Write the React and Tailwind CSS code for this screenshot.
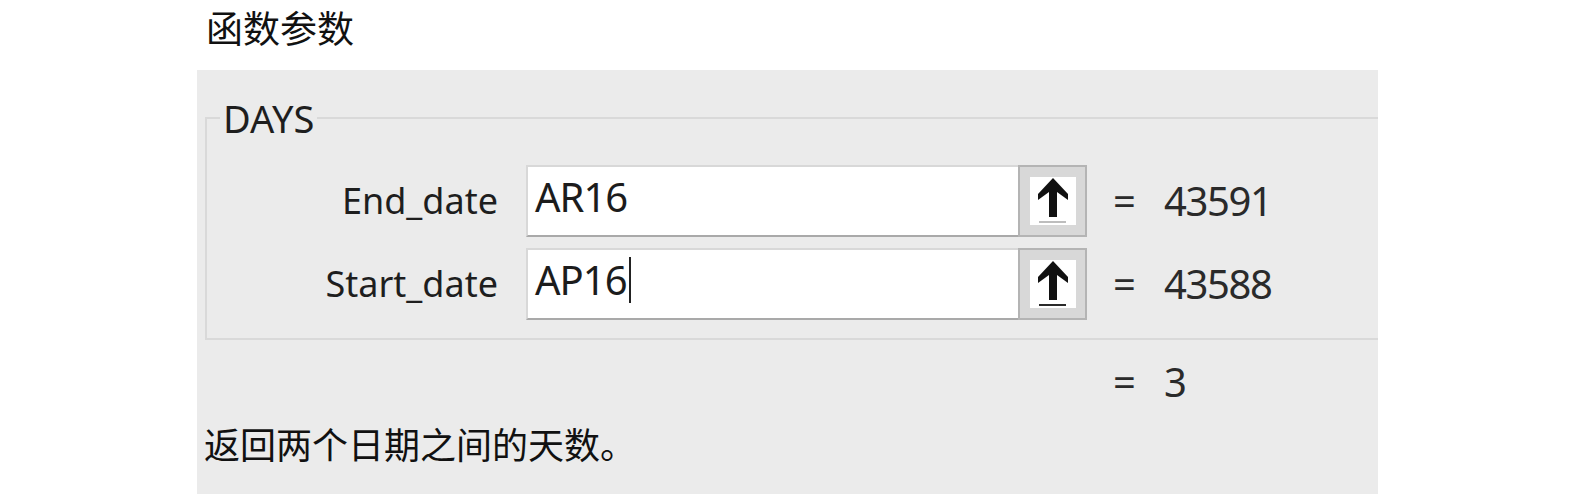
import React from 'react';

const latin = { fontFamily: '"Noto Sans", "Noto Sans CJK SC", sans-serif' };
const cjk = { fontFamily: '"Noto Sans CJK SC", "Noto Sans", sans-serif' };

function RefButton({ active }) {
  return (
    <div className="flex h-[72px] w-[69px] shrink-0 items-center justify-center border-2 border-[#b4b4b4] bg-[#d8d8d8]">
      <div className="h-[48px] w-[46px] bg-white">
        <svg width="46" height="48" viewBox="0 0 46 48">
          <path d="M23 1 L38 17 L38 23 L27 15 L27 40 L19 40 L19 15 L8 23 L8 17 Z" fill="#111" />
          <rect x="9" y="44" width="27" height="2" fill={active ? '#2a2a2a' : '#bdbdbd'} />
        </svg>
      </div>
    </div>
  );
}

function ArgRow({ label, value, result, active }) {
  return (
    <div className="flex h-[72px] items-center">
      <div className="w-[291px] shrink-0 text-right text-[36px] text-[#1e1e1e]" style={latin}>
        {label}
      </div>
      <div
        className="ml-[28px] flex h-[72px] w-[492px] shrink-0 items-center border-t-2 border-l-2 border-b-2 border-t-[#d8d8d8] border-l-[#d8d8d8] border-b-[#a9a9a9] bg-white pb-[8px] pl-[7px] text-[40px] tracking-[-1px] text-[#1c1c1c]"
        style={latin}
      >
        <span>{value}</span>
        {active && <span className="ml-[2px] inline-block h-[46px] w-[2px] bg-[#222]" />}
      </div>
      <RefButton active={active} />
      <div className="ml-[26px] flex items-center text-[40px] text-[#2a2a2a]" style={latin}>
        <span className="w-[51px]">=</span>
        <span className="tracking-[-1.4px]">{result}</span>
      </div>
    </div>
  );
}

export default function App() {
  return (
    <div className="min-h-[494px] bg-white pt-[3px]">
      <div className="ml-[206px] text-[37px] leading-[48px] text-[#111]" style={cjk}>
        函数参数
      </div>

      <div className="ml-[197px] mt-[19px] h-[424px] w-[1181px] overflow-hidden bg-[#ebebeb]">
        <fieldset className="ml-[8px] mt-[25px] w-[1200px] border-2 border-[#d9d9d9] pb-[18px] pt-[24px]">
          <legend className="ml-[13px] px-[3px] text-[38px] leading-[46px] text-[#1e1e1e]" style={latin}>
            DAYS
          </legend>
          <div className="flex flex-col gap-[11px]">
            <ArgRow label="End_date" value="AR16" result="43591" />
            <ArgRow label="Start_date" value="AP16" result="43588" active />
          </div>
        </fieldset>

        <div className="mt-[12px] flex pl-[916px] text-[40px] text-[#2a2a2a]" style={latin}>
          <span className="w-[51px]">=</span>
          <span>3</span>
        </div>

        <div className="mt-[7px] pl-[7px] text-[36px] leading-[48px] text-[#111]" style={cjk}>
          返回两个日期之间的天数。
        </div>
      </div>
    </div>
  );
}
